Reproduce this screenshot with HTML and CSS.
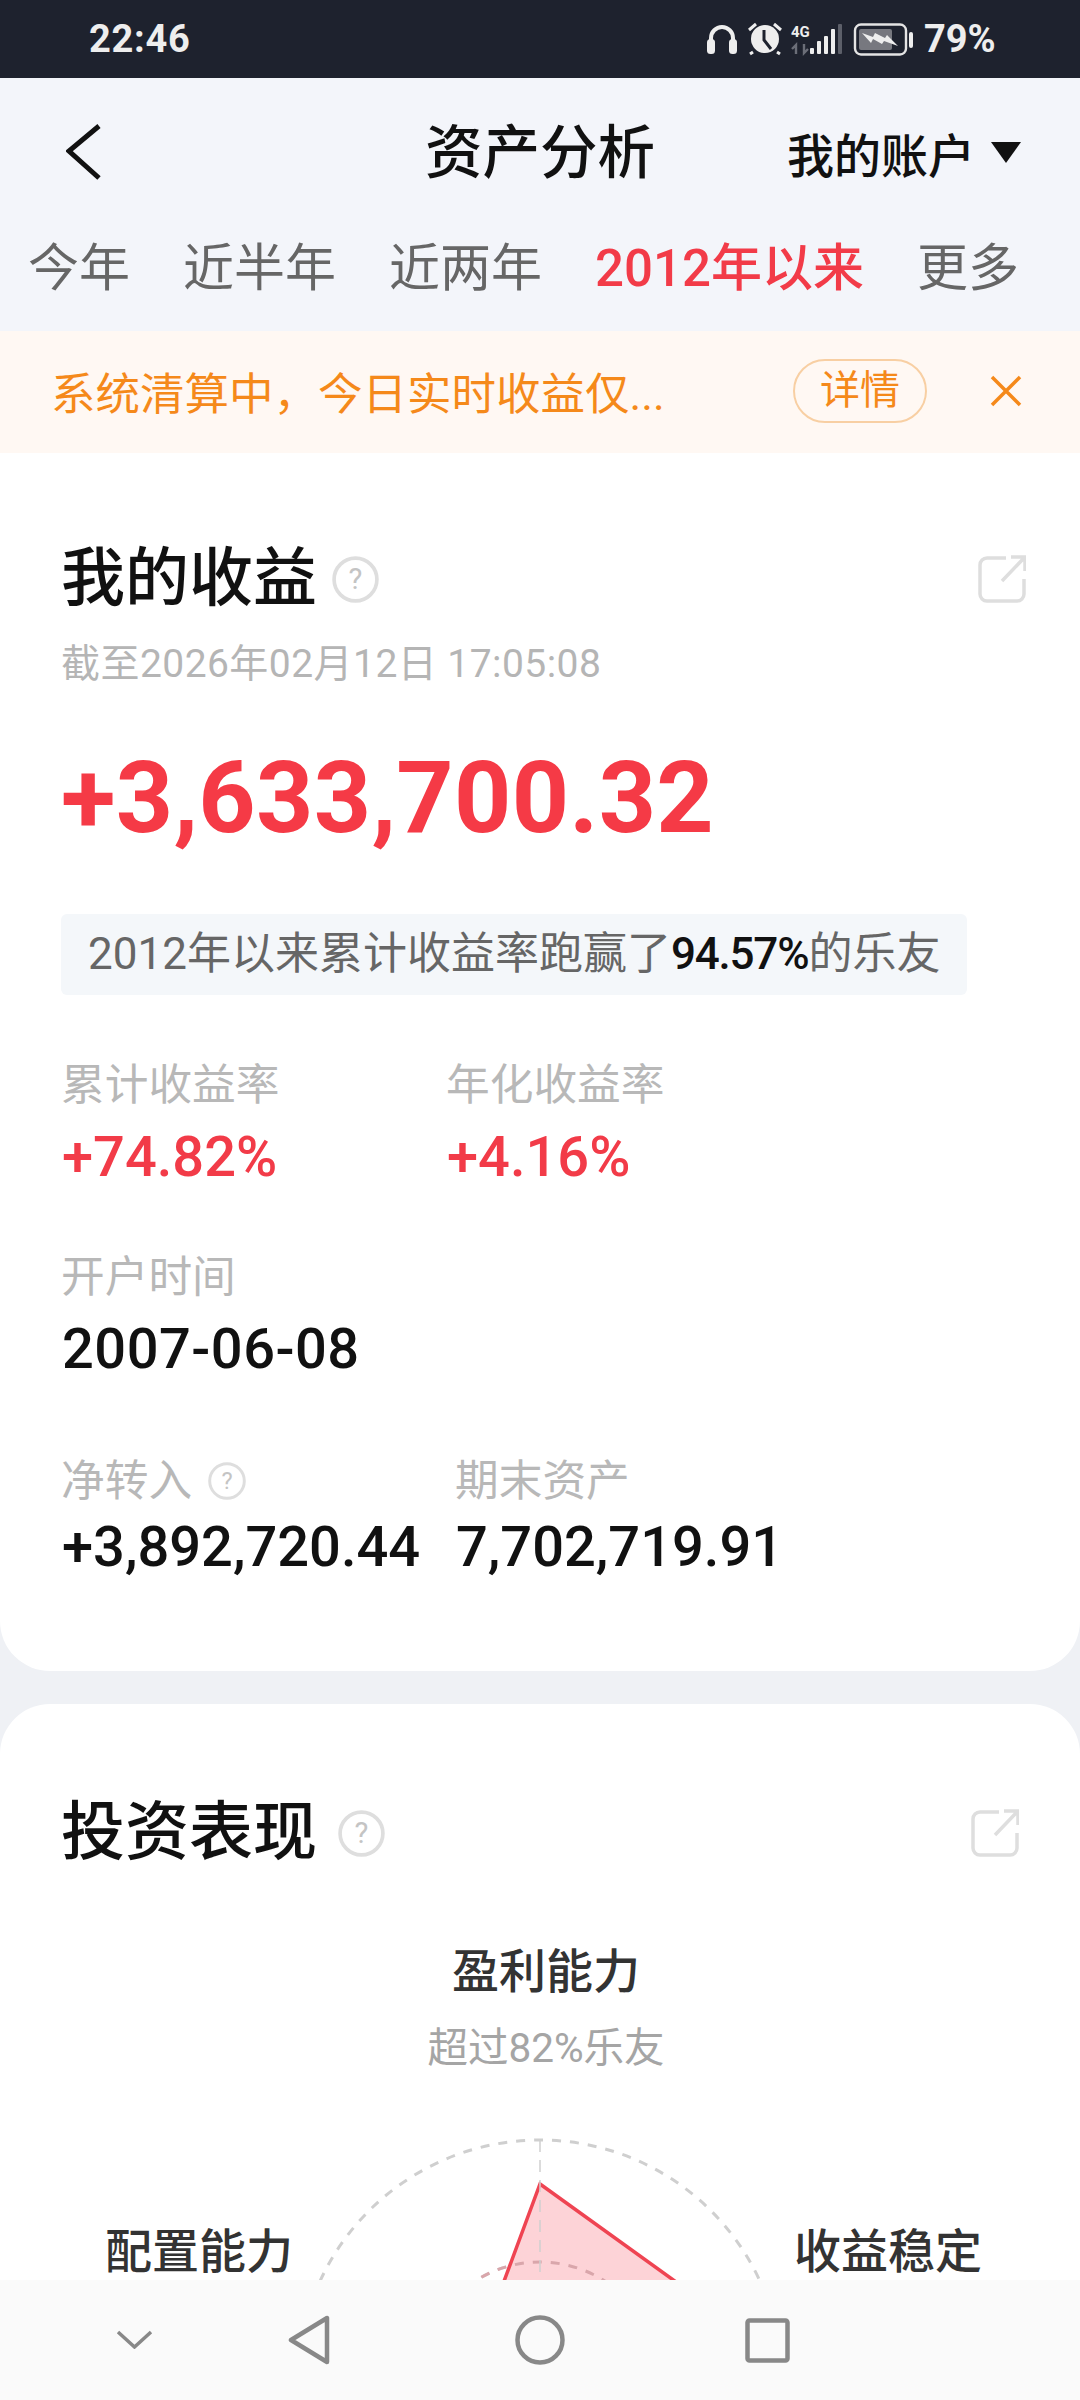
FILE: index.html
```html
<!DOCTYPE HTML>
<html>
<head>
<meta charset="utf-8">
<title>资产分析</title>
<link rel="stylesheet" href="styles.css">
</head>

<body>
<div class="page">
	<!-- 状态栏 -->
	<div class="status">
		<span class="status-time">22:46</span>
		<svg class="status-icons" width="220" height="78" viewBox="700 0 220 78">
			<path d="M711 46V38a11 11 0 0 1 22 0V46" fill="none" stroke="#eee" stroke-width="4"/>
			<rect x="707" y="39" width="8" height="15" rx="3.5" fill="#eee"/>
			<rect x="729" y="39" width="8" height="15" rx="3.5" fill="#eee"/>
			<circle cx="765" cy="39" r="14" fill="#eee"/>
			<path d="M764 30V40L771 49" fill="none" stroke="#1e222e" stroke-width="3"/>
			<path d="M749 30L756 24M781 30L774 24M753 52L750 54M777 52L780 54" stroke="#eee" stroke-width="3"/>
			<text x="791" y="37" class="status-net">4G</text>
			<path d="M796 54V45L792 49M804 44V53L808 49" fill="none" stroke="#6b6e78" stroke-width="2.4"/>
			<rect x="810" y="48" width="4" height="6" rx="1" fill="#eee"/>
			<rect x="817" y="41" width="4" height="13" rx="1" fill="#eee"/>
			<rect x="824" y="36" width="4" height="18" rx="1" fill="#eee"/>
			<rect x="831" y="29" width="4" height="25" rx="1" fill="#eee"/>
			<rect x="838" y="24" width="4" height="30" rx="1" fill="#5c5f69"/>
			<rect x="855" y="24.500" width="51" height="30" rx="6" fill="none" stroke="#e4e4e4" stroke-width="2.400"/>
			<rect x="859" y="29" width="33" height="21" rx="2" fill="#77787f"/>
			<path d="M862 33L873 37L875 33L885 38L887 35L898 46L884 41L882 44L873 39L871 43Z" fill="#eee"/>
			<rect x="909" y="32" width="4" height="16" rx="2" fill="#eee"/>
		</svg>
		<span class="status-batt">79%</span>
	</div>

	<!-- 顶部导航 -->
	<div class="top">
		<div class="nav">
			<div class="nav-left">
				<svg width="36" height="56" viewBox="0 0 36 56"><path d="M33 2L3 27L33 54" fill="none" stroke="#111" stroke-width="5"/></svg>
			</div>
			<div class="nav-title">资产分析</div>
			<div class="nav-right">
				<span>我的账户</span>
				<i class="nav-arrow"></i>
			</div>
		</div>
		<ul class="tabs">
			<li>今年</li>
			<li>近半年</li>
			<li>近两年</li>
			<li class="active">2012年以来</li>
			<li>更多</li>
		</ul>
	</div>

	<!-- 清算提示 -->
	<div class="notice">
		<span class="notice-text">系统清算中，今日实时收益仅...</span>
		<a class="notice-btn" href="javascript:;">详情</a>
		<svg class="notice-close" width="32" height="32" viewBox="0 0 32 32"><path d="M2 2L30 30M30 2L2 30" fill="none" stroke="#f5891a" stroke-width="3.500"/></svg>
	</div>

	<!-- 我的收益 -->
	<div class="card card-income">
		<div class="card-head">
			<h2>我的收益</h2>
			<svg class="help" width="47" height="47" viewBox="0 0 45 45"><circle cx="22.500" cy="22.500" r="20.500" fill="none" stroke="#dedede" stroke-width="3.500"/><text x="22.500" y="32" text-anchor="middle" class="help-mark">?</text></svg>
			<svg class="share" width="48" height="48" viewBox="0 0 48 48"><path d="M28 3H9a7 7 0 0 0-7 7V39a7 7 0 0 0 7 7H39a7 7 0 0 0 7-7V24" fill="none" stroke="#dedede" stroke-width="3.500"/><path d="M24 26L46 3M33 2H47V16" fill="none" stroke="#dedede" stroke-width="3.500"/></svg>
		</div>
		<div class="date">截至2026年02月12日 17:05:08</div>
		<div class="amount">+3,633,700.32</div>
		<div class="rank">2012年以来累计收益率跑赢了<b>94.57%</b>的乐友</div>

		<div class="stats">
			<div class="stat">
				<div class="stat-label">累计收益率</div>
				<div class="stat-value up">+74.82%</div>
			</div>
			<div class="stat">
				<div class="stat-label">年化收益率</div>
				<div class="stat-value up">+4.16%</div>
			</div>
		</div>
		<div class="stats stats-open">
			<div class="stat">
				<div class="stat-label">开户时间</div>
				<div class="stat-value stat-date">2007-06-08</div>
			</div>
		</div>
		<div class="stats stats-money">
			<div class="stat">
				<div class="stat-label">净转入<svg class="help-small" width="38" height="38" viewBox="0 0 45 45"><circle cx="22.500" cy="22.500" r="20.500" fill="none" stroke="#dedede" stroke-width="3.500"/><text x="22.500" y="32" text-anchor="middle" class="help-mark">?</text></svg></div>
				<div class="stat-value">+3,892,720.44</div>
			</div>
			<div class="stat">
				<div class="stat-label">期末资产</div>
				<div class="stat-value">7,702,719.91</div>
			</div>
		</div>
	</div>

	<!-- 投资表现 -->
	<div class="card card-invest">
		<div class="card-head">
			<h2>投资表现</h2>
			<svg class="help" width="47" height="47" viewBox="0 0 45 45"><circle cx="22.500" cy="22.500" r="20.500" fill="none" stroke="#dedede" stroke-width="3.500"/><text x="22.500" y="32" text-anchor="middle" class="help-mark">?</text></svg>
			<svg class="share" width="48" height="48" viewBox="0 0 48 48"><path d="M28 3H9a7 7 0 0 0-7 7V39a7 7 0 0 0 7 7H39a7 7 0 0 0 7-7V24" fill="none" stroke="#dedede" stroke-width="3.500"/><path d="M24 26L46 3M33 2H47V16" fill="none" stroke="#dedede" stroke-width="3.500"/></svg>
		</div>
		<div class="ability">
			<div class="ability-name">盈利能力</div>
			<div class="ability-sub">超过82%乐友</div>
		</div>
		<div class="radar">
			<svg width="1080" height="329" viewBox="0 2071 1080 329">
				<circle cx="540" cy="2380" r="242" fill="none" stroke="#cfcfcf" stroke-width="3" stroke-dasharray="9 9"/>
				<circle cx="540" cy="2380" r="120" fill="none" stroke="#cfcfcf" stroke-width="3" stroke-dasharray="9 9"/>
				<path d="M540 2182L690 2290V2400H480L503 2282Z" fill="#fdd3d7" stroke="#ef4452" stroke-width="3.500"/>
				<circle cx="540" cy="2380" r="120" fill="none" stroke="#d9a6ab" stroke-width="3" stroke-dasharray="9 9"/>
				<path d="M540 2138V2400" fill="none" stroke="#cfcfcf" stroke-width="1.500" stroke-dasharray="12 8"/>
			</svg>
			<span class="radar-label radar-left">配置能力</span>
			<span class="radar-label radar-right">收益稳定</span>
		</div>
	</div>

	<!-- 系统导航条 -->
	<div class="sysbar">
		<svg class="sysbar-fold" width="37" height="19" viewBox="0 0 37 19"><path d="M2 2L18.500 17L35 2" fill="none" stroke="#888" stroke-width="3.500"/></svg>
		<svg class="sysbar-back" width="42" height="50" viewBox="0 0 42 50"><path d="M39 3V47L3 25Z" fill="none" stroke="#888" stroke-width="4.500" stroke-linejoin="round"/></svg>
		<svg class="sysbar-home" width="50" height="50" viewBox="0 0 50 50"><circle cx="25" cy="25" r="22.500" fill="none" stroke="#888" stroke-width="4.500"/></svg>
		<svg class="sysbar-recent" width="45" height="45" viewBox="0 0 45 45"><rect x="2.500" y="2.500" width="40" height="40" rx="2" fill="none" stroke="#888" stroke-width="4.500"/></svg>
	</div>
</div>
</body>
</html>
```

FILE: styles.css
```css
*{padding:0;margin:0;list-style:none;box-sizing:border-box}
body{font-family:Roboto,"Noto Sans CJK SC",sans-serif;background:#eff1f5}
a{text-decoration:none;color:inherit}

.page{width:1080px;height:2400px;position:relative;overflow:hidden;background:#eff1f5}

.status{height:78px;background:#1e222e;color:#eee;display:flex;align-items:center;padding-left:89px;font-weight:700;font-size:38px}
.status-time{width:611px;letter-spacing:.7px}
.status-icons{flex:none}
.status-batt{margin-left:4px;font-size:38px}
.status-net{font-size:15px;font-weight:700;fill:#eee;font-family:Roboto,sans-serif}

.top{background:#f3f5fa}
.nav{height:148px;display:grid;grid-template-columns:1fr auto 1fr;align-items:center}
.nav-left{padding-left:66px;display:flex}
.nav-title{font-size:57.500px;font-weight:500;color:#111;line-height:80px;margin-top:3px}
.nav-right{display:flex;justify-content:flex-end;align-items:center;padding-right:59px;font-size:47px;color:#111;font-weight:500}
.nav-arrow{width:0;height:0;margin-left:16px;border-style:solid;border-width:21px 15px 0;border-color:#111 transparent transparent}

.tabs{height:105px;padding:0 0 27px 28px;display:flex;align-items:center;gap:53px;font-size:51px;color:#666}
.tabs li{margin-top:-2px}
.tabs .active{color:#f23b48;font-weight:500}

.notice{height:122px;background:#fff8f3;display:flex;align-items:center;padding-left:51px;color:#f5891a}
.notice-text{width:742px;font-size:44.500px;white-space:nowrap;margin-top:-3px}
.notice-btn{width:134px;height:64px;border:2px solid #f8cfa3;border-radius:32px;font-size:40px;line-height:60px;text-align:center;margin-top:-2px}
.notice-close{margin-left:63px;margin-top:-2px}

.card{background:#fff}
.card-income{padding:86px 54px 92px 61px;border-radius:0 0 50px 50px}
.card-invest{margin-top:33px;padding-top:89px;border-radius:50px 50px 0 0}

.card-head{display:flex;align-items:center;height:80px}
.card-head h2{font-size:64px;font-weight:500;color:#111;line-height:80px}
.help{margin-left:15px}
.share{margin-left:auto}
.help-mark{font-size:28px;fill:#c4c4c4;font-family:Roboto,sans-serif}
.card-invest .card-head{padding:0 61px 0 61px}
.card-invest .help{margin-left:21px}

.date{margin-top:20px;line-height:50px;font-size:39px;color:#b5b5b5;letter-spacing:.45px}
.amount{margin-top:49px;line-height:120px;font-size:100px;font-weight:700;color:#f53a46;letter-spacing:.3px}

.rank{display:inline-block;margin-top:56px;height:81px;padding:0 27px;line-height:81px;background:#f4f7fa;border-radius:6px;font-size:44px;color:#666;white-space:nowrap}
.rank b{font-weight:500;color:#111;letter-spacing:-1.200px}

.stats{display:grid;grid-template-columns:385px 1fr;margin-top:62px}
.stats-open{margin-top:60px}
.stats-money{grid-template-columns:394px 1fr;margin-top:72px}
.stat-label{display:flex;align-items:center;line-height:56px;font-size:43.700px;color:#b8b8b8}
.stat-value{margin-top:12px;line-height:64px;font-size:56px;font-weight:500;color:#111;white-space:nowrap;padding-left:1px}
.stat-value.up{color:#f23b48}
.stat-date{letter-spacing:.5px}
.stats-money .stat-value{margin-top:6px}
.help-small{margin-left:16px}

.ability{margin-top:69px;padding-left:12px;text-align:center}
.ability-name{line-height:60px;font-size:47px;font-weight:500;color:#333}
.ability-sub{margin-top:21px;line-height:50px;font-size:40.500px;color:#a5a5a5}

.radar{position:relative;height:329px}
.radar svg{display:block}
.radar-label{position:absolute;top:149px;line-height:60px;font-size:47px;font-weight:500;color:#333}
.radar-left{left:105px}
.radar-right{left:794px}

.sysbar{position:absolute;left:0;bottom:0;width:100%;height:120px;background:#fafafa;display:flex;align-items:center;padding-left:116px}
.sysbar svg{flex:none}
.sysbar-fold{margin-top:-1px}
.sysbar-back{margin-left:135px}
.sysbar-home{margin-left:185px}
.sysbar-recent{margin-left:180px}
```
